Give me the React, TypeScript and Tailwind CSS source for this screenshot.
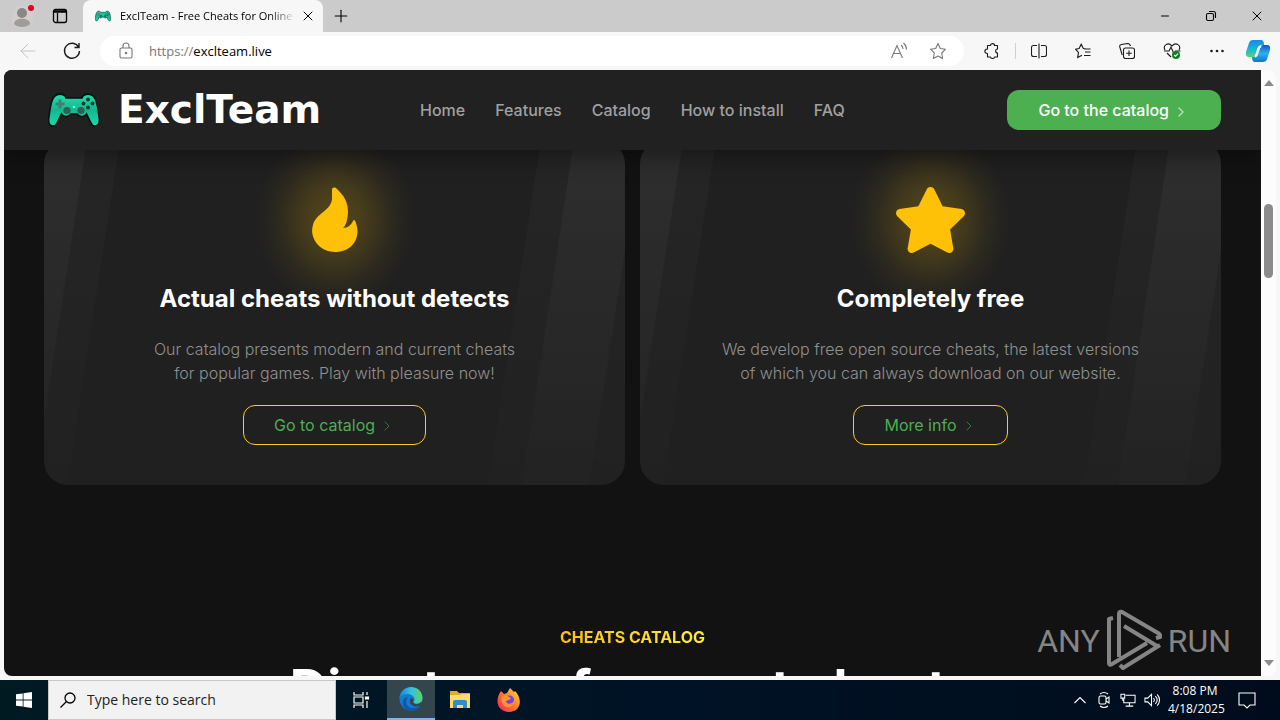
import React from 'react';
import { FaStar } from 'react-icons/fa';
import { ArrowLeft, Plus, X, Minus, ChevronRight } from 'lucide-react';

const navLinks = ['Home', 'Features', 'Catalog', 'How to install', 'FAQ'];

const stroke = { fill: 'none', stroke: 'currentColor', strokeWidth: 1.1 };

function Gamepad({ className }: { className: string }) {
  return (
    <svg viewBox="0 0 52 34" className={className} aria-hidden="true">
      <defs>
        <linearGradient id="pad" x1="0" y1="0" x2="0" y2="1">
          <stop offset="0" stopColor="#1fe0ae" />
          <stop offset="0.5" stopColor="#12b88f" />
          <stop offset="1" stopColor="#17dca6" />
        </linearGradient>
      </defs>
      <path
        d="M7 3 C9 .5 15 .5 17 3 L18 5 H34 L35 3 C37 .5 43 .5 45 3 C48 5 50 14 51.300 26 C52 34 45 35 43 30 L38.500 21 C36 25 31 24 29 21 H23 C21 24 16 25 13.500 21 L9 30 C7 35 0 34 .7 26 C2 14 4 5 7 3Z"
        fill="url(#pad)"
        stroke="#03130f"
        strokeWidth="1.6"
      />
      <path d="M12 6.500v9M7.500 11h9" stroke="#4d7a70" strokeWidth="3" />
      <circle cx="19" cy="17.500" r="3.600" fill="#2f5f56" />
      <circle cx="33" cy="17.500" r="3.600" fill="#2f5f56" />
      <circle cx="40" cy="6.500" r="2" fill="#0b3a30" />
      <circle cx="44.500" cy="10.500" r="2" fill="#0b3a30" />
      <circle cx="40" cy="14.500" r="2" fill="#0b3a30" />
      <circle cx="35.500" cy="10.500" r="2" fill="#0b3a30" />
      <circle cx="26" cy="14" r="1.300" fill="#8dffe6" />
    </svg>
  );
}

function TitleBar() {
  return (
    <div className="flex h-8 bg-[#cbcbcb] text-black">
      <div className="flex w-[83px] items-center gap-4 pl-3">
        <button aria-label="Profile" className="h-6 w-6">
          <svg viewBox="0 0 24 24" className="h-6 w-6">
            <circle cx="10" cy="13" r="11" fill="#d2cecd" />
            <circle cx="10" cy="9" r="5" fill="#8a8786" />
            <path d="M2 20c0-7 16-7 16 0-3 4-13 4-16 0z" fill="#a09c9a" />
            <circle cx="19" cy="4" r="3" fill="#e3001b" />
          </svg>
        </button>
        <button aria-label="Tab actions" className="h-4 w-4">
          <svg viewBox="0 0 16 16" className="h-4 w-4" fill="none" stroke="black" strokeWidth="1.300">
            <rect x="1.500" y="1.500" width="13" height="13" rx="2" />
            <path d="M1.500 3.500h13" strokeWidth="2.500" />
            <path d="M5.500 5v9.500" />
          </svg>
        </button>
      </div>
      <div className="flex w-60 items-center rounded-t-lg bg-[#f7f7f7] pl-3">
        <Gamepad className="h-3 w-4" />
        <span className="ml-[9px] w-44 overflow-hidden whitespace-nowrap bg-linear-to-r from-black from-85% to-transparent bg-clip-text text-[11px] leading-4 text-transparent">
          ExclTeam - Free Cheats for Online Games
        </span>
        <button aria-label="Close tab" className="ml-1"><X className="h-4 w-4" strokeWidth={1.5} /></button>
      </div>
      <button aria-label="New tab" className="ml-2"><Plus className="h-5 w-5" strokeWidth={1.3} /></button>
      <div className="ml-auto flex items-center text-black">
        <button aria-label="Minimize" className="flex w-[46px] justify-center"><Minus className="h-3 w-3" strokeWidth={2} /></button>
        <button aria-label="Restore" className="flex w-[46px] justify-center">
          <svg viewBox="0 0 12 12" className="h-3 w-3" {...stroke}>
            <rect x="1.500" y="3.500" width="7" height="7" rx="1.500" />
            <path d="M4 1.500h4.500q2 0 2 2V8" />
          </svg>
        </button>
        <button aria-label="Close" className="flex w-[46px] justify-center"><X className="h-4 w-4" strokeWidth={1.5} /></button>
      </div>
    </div>
  );
}

const toolIcons = [
  {
    label: 'Split screen',
    d: 'M6 2.500H2.500q-2 0-2 2v7q0 2 2 2H6M10 2.500h3.500q2 0 2 2v7q0 2-2 2H10M8 .5v15',
  },
  {
    label: 'Favorites',
    d: 'M9 6h6.500M10 9h5.500M9 12.500h6.500M10.500 5.800L8.300 5.500 6.200 1.200 4.100 5.500.500 6.200l3 3.200-.8 5L7 12.200',
  },
  {
    label: 'Collections',
    d: 'M6.500 5h7q2 0 2 2v6.500q0 2-2 2h-7q-2 0-2-2V7q0-2 2-2zM10 7.500v5.500M7.200 10.200h5.600M3.200 12L.800 4q-.5-2 1.500-2.500l6.500-1Q10.800.500 11.500 3',
  },
];

function AddressBar() {
  return (
    <div className="flex h-[38px] items-center bg-[#f7f7f7] text-[#1b1b1b]">
      <button aria-label="Back" className="ml-4 text-[#c4c4c4]"><ArrowLeft className="h-6 w-6" strokeWidth={1} /></button>
      <button aria-label="Refresh" className="ml-5">
        <svg viewBox="0 0 24 24" className="h-6 w-6" fill="none" stroke="currentColor" strokeWidth="1.400">
          <path d="M18.500 8A7.500 7.500 0 1 0 19.500 12M19 4v4.500h-4.500" />
        </svg>
      </button>
      <div className="ml-4 flex h-[30px] flex-1 items-center rounded-full bg-white text-[#777777]">
        <svg viewBox="0 0 16 18" className="ml-[18px] h-[18px] w-4" {...stroke}>
          <rect x="2" y="6" width="12" height="10" rx="1.500" />
          <path d="M5 6V4a3 3 0 0 1 6 0v2" />
          <circle cx="8" cy="11" r=".7" fill="currentColor" />
        </svg>
        <a href="https://exclteam.live" className="ml-[15px] text-[13px] leading-5">
          https://<span className="text-black">exclteam.live</span>
        </a>
        <button aria-label="Read aloud" className="ml-auto">
          <svg viewBox="0 0 18 18" className="h-[18px] w-[18px]" {...stroke}>
            <path d="M1.500 16L7 3.500 12.500 16M3.500 11.500h7M11 3q2 1.500 2 4M13.500 1q3 2.500 3 6.500" />
          </svg>
        </button>
        <button aria-label="Add to favorites" className="mr-[17px] ml-[21px]">
          <svg viewBox="0 0 18 18" className="h-[18px] w-[18px]" {...stroke}>
            <path d="M9 1.500l2.300 5 5.200.700-3.800 3.800.9 5.500L9 14l-4.600 2.500.9-5.500L1.500 7.200l5.200-.7z" strokeLinejoin="round" />
          </svg>
        </button>
      </div>
      <div className="flex items-center pl-5">
        <button aria-label="Extensions">
          <svg viewBox="0 0 16 16" className="h-4 w-4" {...stroke} strokeLinejoin="round">
            <path d="M3.500 2.500H6.500C6.500 0 10.500 0 10.500 2.500H13.500V6C11 6 11 10 13.500 10V14H10.500C10.500 16 6.500 16 6.500 14H3.500V10.500C0 10.500 0 6 3.500 6Z" />
          </svg>
        </button>
        <div className="mx-[15px] h-4 w-px bg-[#d0d0d0]" />
        <div className="flex items-center gap-7">
          {toolIcons.map((icon) => (
            <button key={icon.label} aria-label={icon.label}>
              <svg viewBox="0 0 16 16" className="h-4 w-4" {...stroke}><path d={icon.d} /></svg>
            </button>
          ))}
          <button aria-label="Browser essentials">
            <svg viewBox="0 0 18 18" className="h-[18px] w-[18px]" {...stroke}>
              <path d="M2 8C-.5 3.500 5-.500 9 4c4-4.500 9.500-.500 7 4M1 9h5l2-4 3 7 1.500-3h5M4 11l4 4" />
              <circle cx="13" cy="13" r="4" fill="#128020" stroke="none" />
              <path d="M11.200 13l1.300 1.300L15 11.700" stroke="white" />
            </svg>
          </button>
          <button aria-label="Settings and more">
            <svg viewBox="0 0 16 16" className="h-4 w-4" fill="currentColor">
              <circle cx="2.500" cy="8" r="1.300" /><circle cx="8" cy="8" r="1.300" /><circle cx="13.500" cy="8" r="1.300" />
            </svg>
          </button>
        </div>
        <button aria-label="Copilot" className="mr-[9px] ml-5">
          <svg viewBox="0 0 26 24" className="h-6 w-[26px]">
            <defs>
              <linearGradient id="cop1" x1="0" y1="0" x2="0" y2="1">
                <stop offset="0" stopColor="#1687e8" />
                <stop offset=".5" stopColor="#15b5d5" />
                <stop offset="1" stopColor="#5fcf83" />
              </linearGradient>
              <linearGradient id="cop2" x1="0" y1="0" x2="0" y2="1">
                <stop offset="0" stopColor="#1d50c8" />
                <stop offset=".5" stopColor="#27b4ee" />
                <stop offset="1" stopColor="#176fd8" />
              </linearGradient>
            </defs>
            <path d="M8 1h8q3 0 3 5h-2q-2 0-3 3l-2 6q-1 3-4 3H4q-4 0-3-5L4 4q1-3 4-3z" fill="url(#cop1)" />
            <path d="M18 6h4q4 0 3 5l-3 9q-1 3-4 3h-8q-3 0-3-5h2q2 0 3-3l3-6q1-3 3-3z" fill="url(#cop2)" />
            <path d="M16 7q-2 1-2.500 3l-1.700 5q-.5 2-1.800 2.500" fill="none" stroke="white" strokeWidth="2.500" />
          </svg>
        </button>
      </div>
    </div>
  );
}

function SiteHeader() {
  return (
    <header className="relative z-10 flex h-20 shrink-0 items-center bg-[#212121] px-10 shadow-[0_4px_24px_rgba(0,0,0,0.45)]">
      <a href="#home" className="flex w-[376px] items-center text-white">
        <Gamepad className="ml-1 h-[34px] w-[52px]" />
        <span className="ml-[18px] font-[DejaVu_Sans,sans-serif] text-[39px] leading-10 font-bold">ExclTeam</span>
      </a>
      <nav className="flex gap-[30px] text-base font-medium text-[#a0a0a0]">
        {navLinks.map((link) => (
          <a key={link} href="#catalog">{link}</a>
        ))}
      </nav>
      <button className="ml-auto flex h-10 items-center rounded-xl bg-[#4caf50] pl-[31px] pr-8 text-base font-medium text-white">
        Go to the catalog
        <ChevronRight className="ml-1 mt-1 h-4 w-4 opacity-60" strokeWidth={2} />
      </button>
    </header>
  );
}

function Flame() {
  return (
    <svg viewBox="0 0 46 66" className="h-[66px] w-[46px]">
      <path
        d="M20 3C20 0 23 0 25 2C34 10 38 20 35 33C34 37 33 39 31 41C36 41 39 38 41 34C42 32 43 33 44 36C49 50 41 65 23 65C7 65 -3 50 1 38C4 26 19 24 20 12Z"
        fill="#ffc107"
      />
    </svg>
  );
}

type CardProps = {
  icon: React.ReactNode;
  title: string;
  lines: string[];
  action: string;
};

function FeatureCard({ icon, title, lines, action }: CardProps) {
  return (
    <article className="relative flex h-[345px] flex-1 flex-col items-center overflow-hidden rounded-3xl bg-[#202020] text-center">
      <svg viewBox="0 0 581 345" preserveAspectRatio="none" className="absolute inset-0 h-full w-full" aria-hidden="true">
        <defs>
          <linearGradient id="fade" x1="0" y1="0" x2="0" y2="345" gradientUnits="userSpaceOnUse">
            <stop offset="0" stopColor="white" stopOpacity=".04" />
            <stop offset="1" stopColor="white" stopOpacity=".008" />
          </linearGradient>
        </defs>
        <path d="M0 0H76L23 345H0ZM497 0H581V345H444Z" fill="url(#fade)" opacity=".65" />
        <path d="M0 0H43L0 280ZM530 0H581V110L545 345H478Z" fill="url(#fade)" />
      </svg>
      <div className="relative mt-[46px] flex h-[68px] items-center justify-center">
        <div className="absolute -inset-y-14 w-[160px] rounded-full bg-[radial-gradient(closest-side,rgba(255,193,7,0.26)_0%,rgba(255,193,7,0.16)_40%,rgba(255,193,7,0.06)_70%,rgba(255,193,7,0.02)_88%,transparent_100%)]" />
        <div className="relative">{icon}</div>
      </div>
      <h3 className="relative mt-[29px] text-2xl leading-8 font-bold text-white">{title}</h3>
      <p className="relative mt-[22px] text-base leading-6 font-light text-[#909090]">
        {lines[0]}<br />{lines[1]}
      </p>
      <button className="relative mt-5 flex h-10 items-center rounded-xl border border-[#ffc926] px-[30px] text-base text-[#4caf50]">
        {action}
        <ChevronRight className="ml-1 mt-px h-4 w-4 opacity-60" strokeWidth={1.5} />
      </button>
    </article>
  );
}

function Watermark() {
  return (
    <div className="absolute right-[30px] bottom-0 flex h-[70px] items-center gap-[6px] font-[Roboto,sans-serif] text-[32px] text-[#858585]">
      <span>ANY</span>
      <svg viewBox="0 0 56 64" className="h-16 w-14" {...stroke} strokeWidth="4" strokeLinejoin="round" aria-hidden="true">
        <path d="M13 48V5q0-3 3-2l36 21q3 2 2 4l-4 1M18 17l33 20M54 36L17 59l-3-3M7 9l-4 1v44q0 3 3 1l35-21" />
      </svg>
      <span>RUN</span>
    </div>
  );
}

function PageContent() {
  return (
    <main className="relative flex min-h-0 flex-1 flex-col overflow-hidden rounded-l-lg bg-[#121212]">
      <SiteHeader />
      <section className="-mt-[10px] flex gap-[15px] px-10">
        <FeatureCard
          icon={<Flame />}
          title="Actual cheats without detects"
          lines={['Our catalog presents modern and current cheats', 'for popular games. Play with pleasure now!']}
          action="Go to catalog"
        />
        <FeatureCard
          icon={<FaStar className="h-[66px] w-[75px] text-[#ffc107]" />}
          title="Completely free"
          lines={['We develop free open source cheats, the latest versions', 'of which you can always download on our website.']}
          action="More info"
        />
      </section>
      <section className="mt-10 flex flex-col items-center pt-[100px]">
        <p className="bg-linear-to-r from-[#ffc107] to-[#ffeb3b] bg-clip-text text-base leading-6 font-bold text-transparent">
          CHEATS CATALOG
        </p>
        <h2 className="mt-[10px] text-[52px] leading-[60px] font-bold whitespace-nowrap text-white">Directory of current cheats</h2>
      </section>
      <Watermark />
    </main>
  );
}

function Scrollbar() {
  return (
    <div className="flex w-[15px] flex-col items-center justify-between rounded-r-lg bg-[#fcfcfc] py-[10px]">
      <svg viewBox="0 0 10 6" className="h-[6px] w-[10px]" fill="#8b8b8b"><path d="M0 6L5 0l5 6z" /></svg>
      <div className="mt-[118px] mb-auto h-[74px] w-[9px] rounded-full bg-[#8b8b8b]" />
      <svg viewBox="0 0 10 6" className="h-[6px] w-[10px]" fill="#8b8b8b"><path d="M0 0h10L5 6z" /></svg>
    </div>
  );
}

function Taskbar() {
  return (
    <footer className="flex h-10 items-center bg-linear-to-r from-[#001a22] via-[#001326] to-[#000c1c] text-white">
      <button aria-label="Start" className="flex w-12 justify-center">
        <svg viewBox="0 0 16 16" className="h-4 w-4" fill="white">
          <path d="M0 2.300L6.700 1.400V7.600H0zM7.500 1.300L16 0V7.600H7.500zM0 8.400H6.700V14.600L0 13.700zM7.500 8.400H16V16L7.500 14.800z" />
        </svg>
      </button>
      <label className="flex h-10 w-72 items-center border border-[#c8c8c8] bg-[#f2f2f2] pl-[11px]">
        <svg viewBox="0 0 16 16" className="h-4 w-4" fill="none" stroke="black" strokeWidth="1.300">
          <circle cx="10" cy="6" r="5" /><path d="M6.500 9.500L.500 15.500" />
        </svg>
        <input aria-label="Search" placeholder="Type here to search" className="ml-[11px] w-52 bg-transparent font-[Open_Sans,sans-serif] text-sm outline-none placeholder:text-[#222]" />
      </label>
      <button aria-label="Task view" className="flex w-[51px] justify-center">
        <svg viewBox="0 0 17 16" className="h-4 w-[17px]" fill="none" stroke="white" strokeWidth="1.200">
          <path d="M1 0v3h9V0M1 16v-3h9v3M1 5h9v6H1zM14 0v3M14 9v7" />
          <path d="M12.500 5h3v2h-3z" fill="white" />
        </svg>
      </button>
      <button aria-label="Edge" className="flex h-10 w-12 items-center justify-center border-b-2 border-[#76b9ed] bg-[#33454d]">
        <svg viewBox="0 0 24 24" className="h-6 w-6">
          <defs>
            <linearGradient id="edge" x1="0" y1="0" x2="1" y2="0">
              <stop offset="0" stopColor="#1684d8" /><stop offset=".5" stopColor="#35c1df" /><stop offset="1" stopColor="#61d45c" />
            </linearGradient>
          </defs>
          <circle cx="12" cy="12" r="11.500" fill="#147bd1" />
          <path d="M.500 11C2-4 23-3 23.500 11c0 6-8 7-9 4 3-4-1-8-6-8-4 0-7 2-8 4z" fill="url(#edge)" />
          <path d="M9 10c-5 6 1 15 12 9-5 7-15 6-17-1-1-5 2-8 5-8z" fill="#1158a7" />
          <path d="M14 15c1 3 6 3 8 0l2 3-3 1c-7 2-11-2-10-6 0-2 2-3 3-1 1 1 0 2 0 3z" fill="#33454d" />
        </svg>
      </button>
      <button aria-label="File Explorer" className="flex w-[50px] justify-center">
        <svg viewBox="0 0 22 20" className="h-5 w-[22px]">
          <path d="M1 1h7l2 2h11v15H1z" fill="#e9a821" />
          <path d="M1 5h10l2-1h8v14H1z" fill="#ffdc70" />
          <path d="M4 18v-6q0-2 2-2h10q2 0 2 2v6h-4v-3H8v3z" fill="#338bc7" />
        </svg>
      </button>
      <button aria-label="Firefox" className="flex w-12 justify-center">
        <svg viewBox="0 0 24 24" className="h-6 w-6">
          <defs>
            <linearGradient id="fox" x1="1" y1="0" x2="0" y2="1">
              <stop offset="0" stopColor="#ffe83d" /><stop offset=".5" stopColor="#ff782c" /><stop offset="1" stopColor="#f51c69" />
            </linearGradient>
          </defs>
          <path d="M4 3l3 3 3-1 3-5 4 4 1-1c8 8 6 21-6 21C1 24-3 13 4 3z" fill="url(#fox)" />
          <circle cx="12.500" cy="12" r="4.500" fill="#7543e2" />
          <path d="M5 8c4-2 6 1 9 2-1 3-4 1-5 4 2 3 6 2 8-1 0 5-4 7-8 6s-5-6-4-11z" fill="#ff9231" />
        </svg>
      </button>
      <div className="ml-auto flex items-center gap-2 font-[Open_Sans,sans-serif]">
        <svg viewBox="0 0 16 16" className="h-4 w-4" {...stroke}><path d="M2.500 11L8 5.500l5.500 5.500" /></svg>
        <svg viewBox="0 0 16 18" className="h-[18px] w-4" {...stroke}><rect x="3" y="5" width="7" height="8" rx="1.500" /><path d="M10 8l3-2v6l-3-2M4 3q4-3 8 0M4 15q4 3 8 0" /></svg>
        <svg viewBox="0 0 17 16" className="h-4 w-4" {...stroke}><path d="M6 3h10v8H4V7M10 11v3M6 14.500h8M1 2h4v4H1zM3 6v3" /></svg>
        <svg viewBox="0 0 17 14" className="h-4 w-4" {...stroke}><path d="M1 5h3l4-4v12L4 9H1zM10 5q2 2 0 4M12 3q4 4 0 8M14 1q5 6 0 12" /></svg>
        <div className="w-[54px] text-center text-xs leading-[18px] whitespace-nowrap">
          <div>8:08 PM</div>
          <div>4/18/2025</div>
        </div>
        <button aria-label="Notifications" className="mr-6 ml-2">
          <svg viewBox="0 0 18 18" className="h-[18px] w-[18px]" {...stroke}><path d="M1 2h16v12h-5l-3 3-3-3H1z" /></svg>
        </button>
      </div>
    </footer>
  );
}

export default function App() {
  return (
    <div className="flex h-screen flex-col overflow-hidden bg-[#f7f7f7] font-[Inter,sans-serif]">
      <div className="font-[Open_Sans,sans-serif]">
        <TitleBar />
        <AddressBar />
      </div>
      <div className="mb-1 flex min-h-0 flex-1 pr-1 pl-1">
        <PageContent />
        <Scrollbar />
      </div>
      <Taskbar />
    </div>
  );
}
